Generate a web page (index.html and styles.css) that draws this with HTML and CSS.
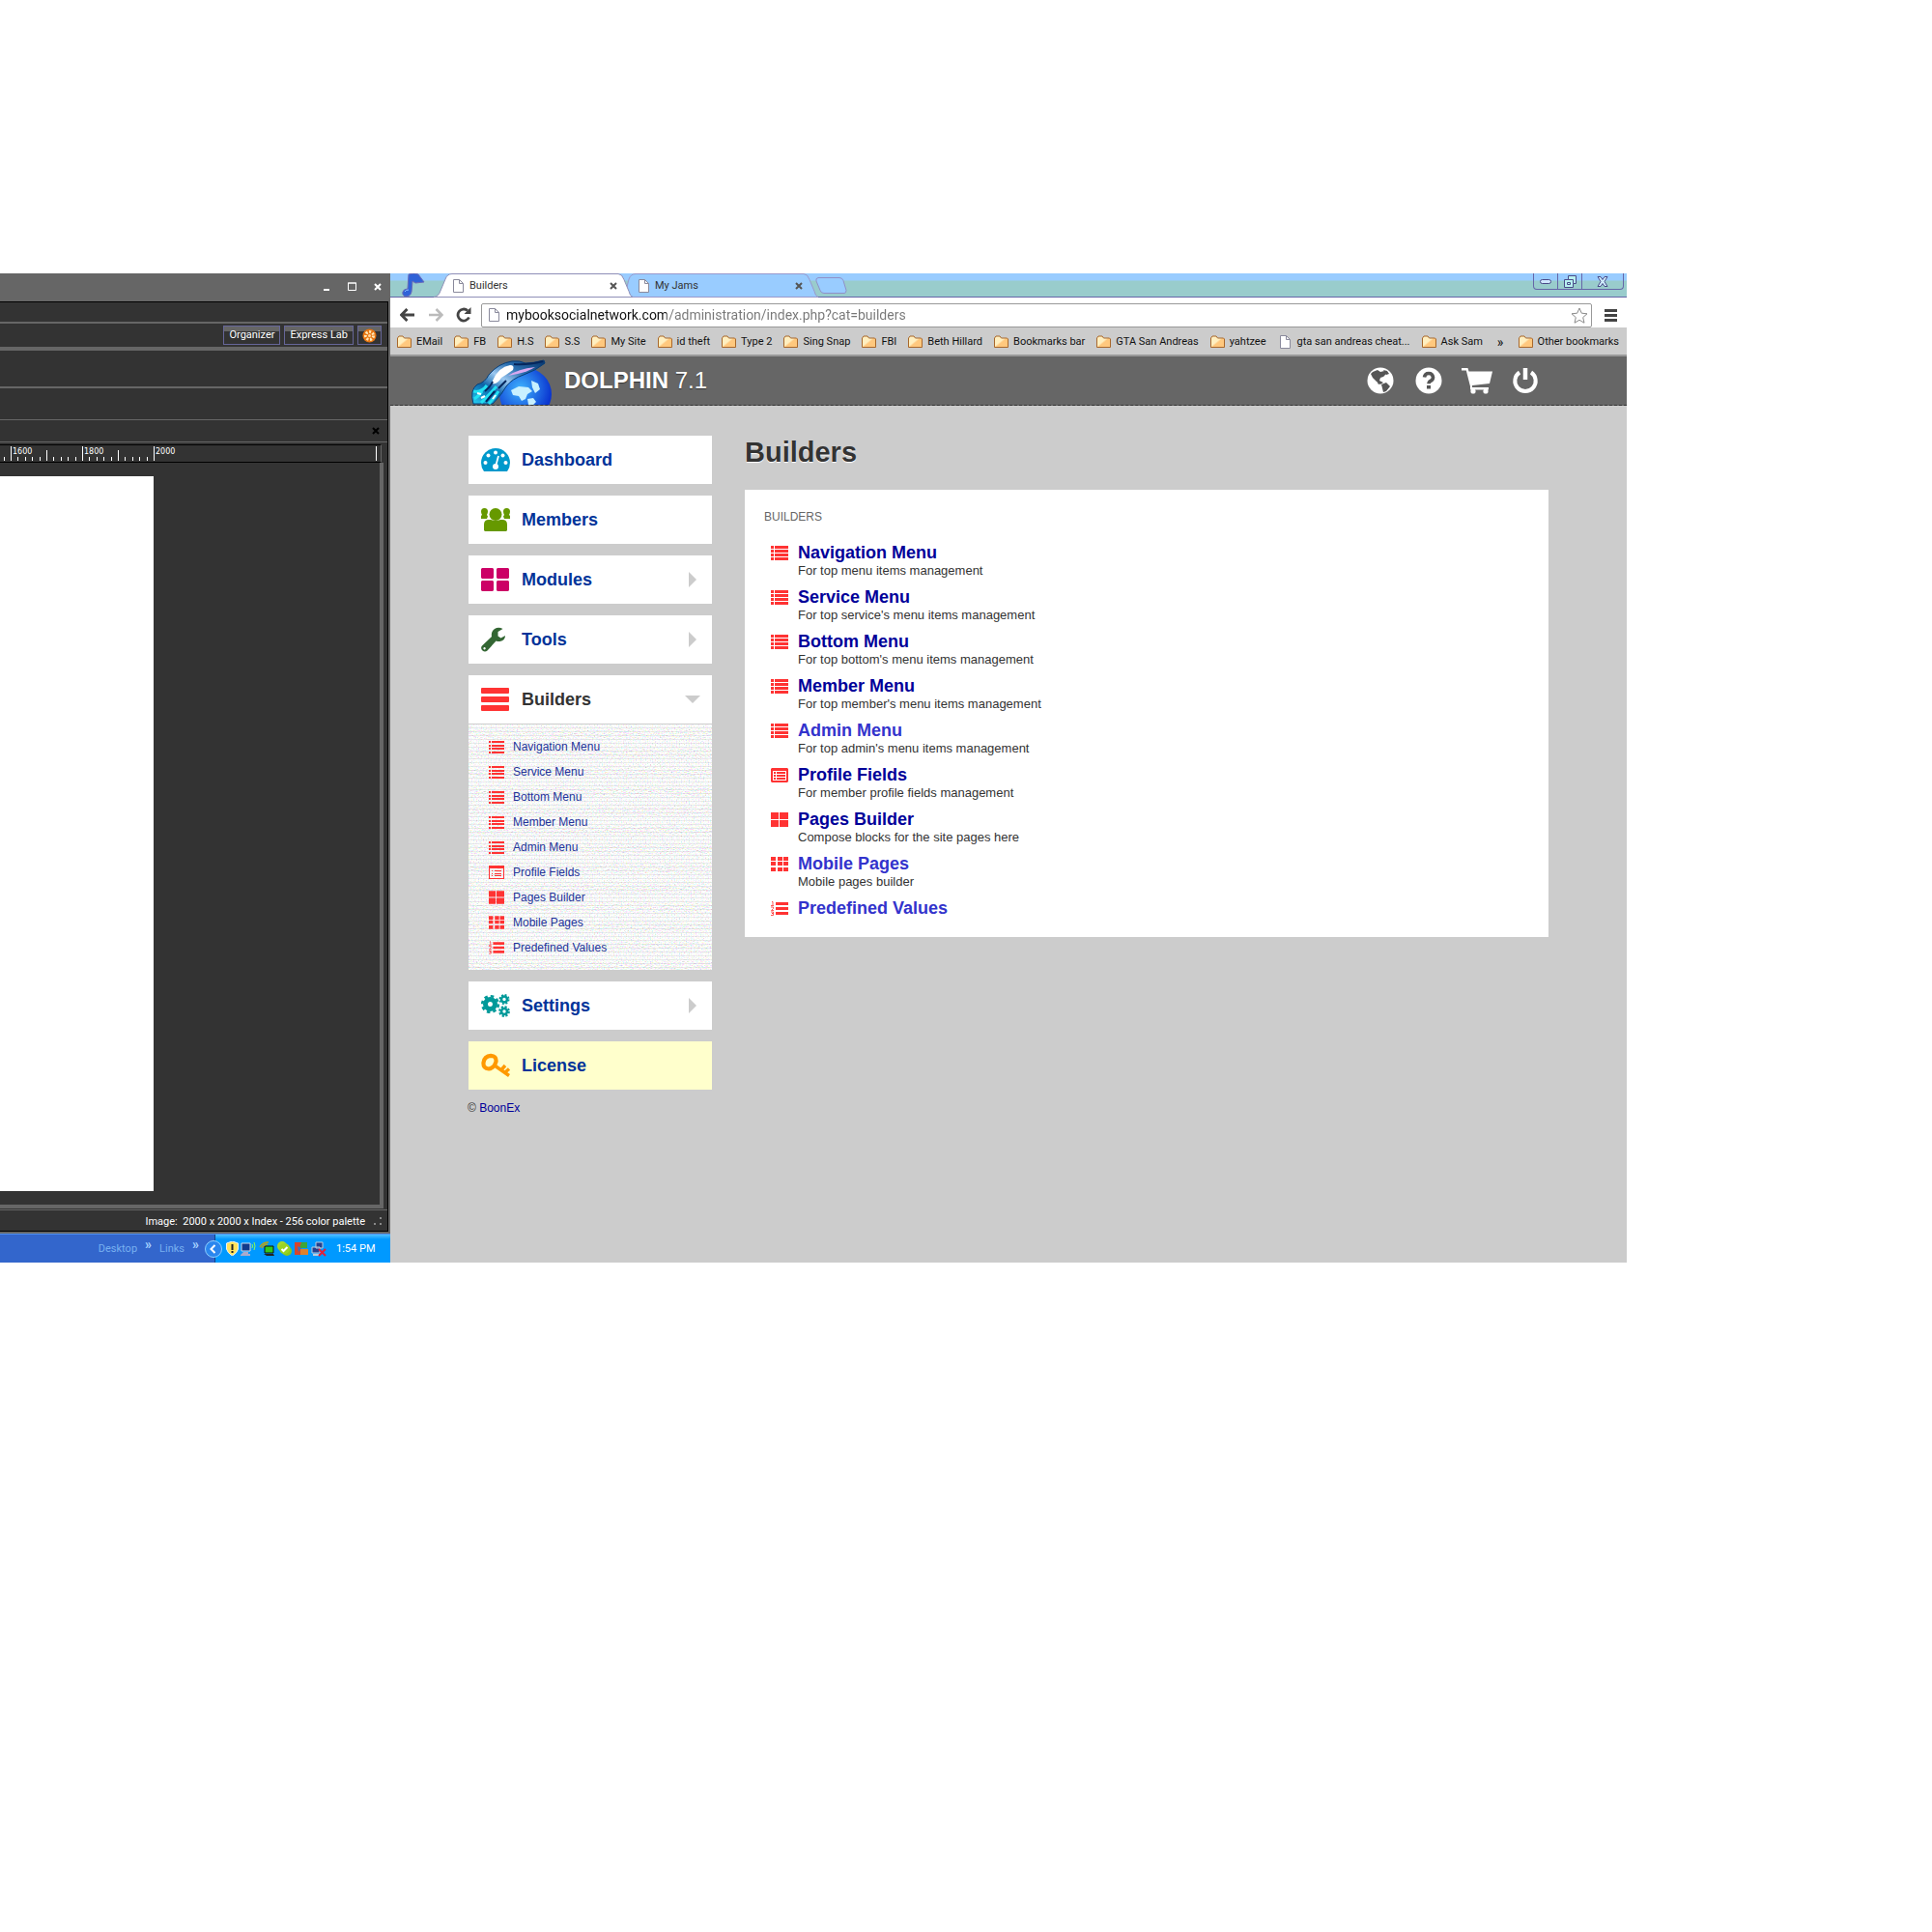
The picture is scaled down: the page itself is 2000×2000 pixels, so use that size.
FILE: index.html
```html
<!DOCTYPE html>
<html lang="en">
<head>
<meta charset="utf-8">
<title>Builders</title>
<link rel="stylesheet" href="styles.css">
</head>
<body>
<svg class="defs" aria-hidden="true">
  <linearGradient id="g-folder" x1="0" y1="0" x2="1" y2="1"><stop offset=".45" stop-color="#ffefc0"/><stop offset=".55" stop-color="#ffc87e"/></linearGradient>
  <radialGradient id="g-globe" cx=".4" cy=".4" r=".6"><stop offset="0" stop-color="#3fb4ff"/><stop offset="1" stop-color="#0a35d0"/></radialGradient>
  <linearGradient id="g-dolphin" x1="0" y1="1" x2="1" y2="0"><stop offset="0" stop-color="#27d3f5"/><stop offset=".3" stop-color="#0b62a8"/><stop offset=".5" stop-color="#9cc8f0"/><stop offset=".7" stop-color="#2a6fb0"/><stop offset="1" stop-color="#06336a"/></linearGradient>
  <symbol id="folder" viewBox="0 0 15 13"><path d="M.5 12V2.5L2 .5h4l1.500 2h6l1 1V12z" fill="url(#g-folder)" stroke="#a8682c"/></symbol>
  <symbol id="page" viewBox="0 0 11 14"><path d="M.5.5h6l4 4v9H.5z" fill="#fff" stroke="#8a8a9c"/><path d="M6.500.5v4h4" fill="none" stroke="#8a8a9c"/></symbol>
  <symbol id="cross" viewBox="0 0 8 8"><path d="M1 1l6 6M7 1L1 7" stroke="currentColor" stroke-width="2" fill="none"/></symbol>
  <symbol id="list" viewBox="0 0 18 15"><path d="M0 0h3v3H0zM4 0h14v3H4zM0 4h3v3H0zM4 4h14v3H4zM0 8h3v3H0zM4 8h14v3H4zM0 12h3v3H0zM4 12h14v3H4z"/></symbol>
  <symbol id="list-small" viewBox="0 0 16 14"><path d="M0 1h2v2H0zM3 1h13v2H3zM0 5h2v2H0zM3 5h13v2H3zM0 8h2v2H0zM3 8h13v2H3zM0 12h2v2H0zM3 12h13v2H3z"/></symbol>
  <symbol id="form" viewBox="0 0 18 15"><path fill-rule="evenodd" d="M1 0h16l1 1v13l-1 1H1l-1-1V1zM2 3v10h14V3zM3 4h2v2H3zM6 4h9v2H6zM3 7h2v2H3zM6 7h9v2H6zM3 10h2v2H3zM6 10h9v2H6z"/></symbol>
  <symbol id="form-small" viewBox="0 0 16 14"><path fill-rule="evenodd" d="M0 0h16v14H0zM1 3v10h14V3zM3 5h1v1H3zM6 5h7v1H6zM3 8h1v1H3zM6 8h7v1H6zM3 10h1v1H3zM6 10h7v1H6z"/></symbol>
  <symbol id="blocks" viewBox="0 0 18 15"><path d="M0 0h8v7H0zM9 0h9v7h-9zM0 8h8v7H0zM9 8h9v7h-9z"/></symbol>
  <symbol id="cells" viewBox="0 0 18 15"><path d="M0 0h5v4H0zM7 0h5v4H7zM13 0h5v4h-5zM0 5h5v4H0zM7 5h5v4H7zM13 5h5v4h-5zM0 11h5v4H0zM7 11h5v4H7zM13 11h5v4h-5z"/></symbol>
  <symbol id="numbered" viewBox="0 0 18 15"><path d="M5 1h13v3H5zM5 6h13v3H5zM5 11h13v3H5z"/><path d="M1 .5h1V4M0 4.500h3M0 6h2.500v1.500L.5 9.500H3M0 11h2.500v1.500H1h1.500v2H0" fill="none" stroke="#ff3333" stroke-width=".8"/></symbol>
</svg>

<main class="desktop">
  <section class="left" aria-label="Photo editor">
    <div class="editor">
      <header class="editor-title">
        <button aria-label="Minimize"><svg width="7" height="9"><path d="M0 7h6v2H0z" fill="#fff"/></svg></button>
        <button aria-label="Maximize"><svg width="9" height="9"><path d="M.5 1h8v7.500h-8zM0 1h9" fill="none" stroke="#fff"/></svg></button>
        <button aria-label="Close"><svg width="8" height="8"><use href="#cross"/></svg></button>
      </header>
      <div class="editor-body">
        <div class="menu-row"></div>
        <div class="tool-row">
          <button>Organizer</button>
          <button>Express Lab</button>
          <button class="wheel" aria-label="Palette"><svg width="15" height="15" viewBox="0 0 15 15"><circle cx="7.500" cy="7.500" r="7" fill="#e87511"/><circle cx="7.500" cy="7.500" r="4" fill="none" stroke="#ffe9b8" stroke-width="3" stroke-dasharray="2 1.600"/><circle cx="7.500" cy="7.500" r="1.500" fill="#ffd7a0"/></svg></button>
        </div>
        <div class="options-row"></div>
        <div class="blank-row"></div>
        <div class="doc-row"><button aria-label="Close image"><svg width="8" height="8"><use href="#cross"/></svg></button></div>
        <div class="ruler">
          <svg width="390" height="16"><path d="M11.500 1v15M85.500 1v15M159.500 1v15M389.500 1v15M48.500 5v11M122.500 5v11M4.500 12v4M18.500 12v4M26.500 12v4M33.500 12v4M41.500 12v4M55.500 12v4M63.500 12v4M70.500 12v4M78.500 12v4M92.500 12v4M100.500 12v4M107.500 12v4M115.500 12v4M129.500 12v4M137.500 12v4M144.500 12v4M152.500 12v4" stroke="#fff"/><text x="13" y="9">1600</text><text x="87" y="9">1800</text><text x="161" y="9">2000</text></svg>
        </div>
        <div class="workspace"><div class="canvas"></div></div>
        <div class="status">Image:&nbsp; 2000 x 2000 x Index - 256 color palette<svg width="10" height="10" viewBox="0 0 10 10"><path d="M7 0h2v2H7zM7 6h2v2H7zM1 6h2v2H1z" fill="#888"/></svg></div>
      </div>
    </div>
    <footer class="taskbar">
      <nav class="quick"><a href="#">Desktop</a><b>»</b><a href="#">Links</a><b>»</b></nav>
      <div class="tray">
        <button class="expand" aria-label="Show hidden icons"><svg width="18" height="18" viewBox="0 0 18 18"><circle cx="9" cy="9" r="8.500" fill="#2a86ee" stroke="#8fd0ff"/><path d="M10.500 5L6.500 9l4 4" fill="none" stroke="#fff" stroke-width="2"/></svg></button>
        <svg width="13" height="15" viewBox="0 0 13 15"><path d="M6.500 0L12.500 2v6q-1 4-6 7-5-3-6-7V2z" fill="#ffe25a" stroke="#e8f3ff"/><path d="M6.500 3v6M6.500 10v2" stroke="#222" stroke-width="2"/></svg>
        <svg width="17" height="15" viewBox="0 0 17 15"><path d="M1 2h9v8H1z" fill="#123a8c" stroke="#cde"/><path d="M3 11h5v2h2v2H0v-1z" fill="#aac"/><path d="M12 3q1 2 0 4M14 1q2 4 0 8" stroke="#8cff50" fill="none"/></svg>
        <svg width="17" height="16" viewBox="0 0 17 16"><path d="M6 5h9v7H6z" fill="#2fc91b" stroke="#111"/><path d="M5 13l10 0 1 2H8z" fill="#222"/><path d="M1 6q3-5 9-5M3 7q2-4 6-4" stroke="#b7a21a" stroke-width="1.500" fill="none"/></svg>
        <svg width="15" height="15" viewBox="0 0 15 15"><circle cx="5" cy="5" r="5" fill="#a5d92b"/><circle cx="10" cy="10" r="5" fill="#8cc919"/><circle cx="7.500" cy="7.500" r="5.500" fill="#9bd321"/><path d="M4.500 8l2 2 4-4" stroke="#fff" stroke-width="2" fill="none"/></svg>
        <svg width="16" height="16" viewBox="0 0 16 16"><path d="M1 1h7v13H1z" fill="#d8452c"/><path d="M8 1h6v6H6z" fill="#3da53a"/><path d="M7 8h8v6H7z" fill="#e0812b"/><path d="M4 5l4 2-3 4" fill="#3b6fc4"/></svg>
        <svg width="16" height="16" viewBox="0 0 16 16"><path d="M5 1h7v6H5zM1 6h8v6H1z" fill="#24408f" stroke="#bcd"/><path d="M2 14h6" stroke="#bcd" stroke-width="2"/><path d="M8 8l7 7M15 8l-7 7" stroke="#e0203a" stroke-width="2"/></svg>
        <time>1:54 PM</time>
      </div>
    </footer>
  </section>

  <section class="browser" aria-label="Web browser">
    <div class="tabstrip">
      <svg class="note" width="24" height="24" viewBox="0 0 24 24"><path d="M7 1q6-2 10 0l6 8-9 1-3-2-1 11q-1 5-6 5-4-1-3-5 1-3 5-3z" fill="#2f62d8" stroke="#6a6ab8"/><path d="M3 19q1-2 4-2" stroke="#8fc0ff" fill="none"/></svg>
      <div class="tab active">
        <svg class="tab-shape" viewBox="0 0 206 25" preserveAspectRatio="none"><path d="M0 24.500Q5 24 7 18L12 6Q14 .5 19 .5H191q4 0 6 6l5 12q1 5 4 6z" fill="#fff" stroke="#8f8fb8"/></svg>
        <svg width="11" height="14"><use href="#page"/></svg><span>Builders</span>
        <button aria-label="Close tab"><svg width="8" height="8"><use href="#cross"/></svg></button>
      </div>
      <div class="tab">
        <svg class="tab-shape" viewBox="0 0 206 25" preserveAspectRatio="none"><path d="M0 24.500Q5 24 7 18L10 6Q12 .5 17 .5H191q4 0 6 6l5 12q1 5 4 6z" fill="#99ccff" stroke="#9999cc"/></svg>
        <svg width="11" height="14"><use href="#page"/></svg><span>My Jams</span>
        <button aria-label="Close tab"><svg width="8" height="8"><use href="#cross"/></svg></button>
      </div>
      <button class="newtab" aria-label="New tab"><svg width="33" height="17" viewBox="0 0 33 17"><path d="M3 .5h22q3 0 4 3l3 10q0 3-2 3H9q-3 0-4-3L1 4Q0 1 3 .5z" fill="#99ccff" stroke="#9090c8"/></svg></button>
      <div class="winbuttons">
        <button aria-label="Minimize"><svg width="12" height="5"><rect x=".5" y=".5" width="11" height="4" rx="2" fill="#cfe6ff" stroke="#4a4a88"/></svg></button>
        <button aria-label="Restore"><svg width="13" height="13"><path d="M4.500.5h8v8h-3v4h-9v-8h4z" fill="#b8f0f0" stroke="#4a4a88"/><path d="M4.500 4.500h5v4M3.500 7.500h3v2h-3z" fill="none" stroke="#4a4a88"/></svg></button>
        <button class="wide" aria-label="Close"><svg width="12" height="11" viewBox="0 0 12 11"><path d="M1 .5h3l2 3 2-3h3L8 5.500l3 5H8l-2-3-2 3H1l3-5z" fill="#cfeeff" stroke="#4a4a88"/></svg></button>
      </div>
    </div>
    <div class="toolbar">
      <button aria-label="Back"><svg width="16" height="14" viewBox="0 0 16 14"><path d="M1.500 7H15M7.500 1l-6 6 6 6" stroke="#444" stroke-width="3" fill="none"/></svg></button>
      <button aria-label="Forward"><svg width="16" height="14" viewBox="0 0 16 14"><path d="M14.500 7H1M8.500 1l6 6-6 6" stroke="#bbb" stroke-width="2.500" fill="none"/></svg></button>
      <button aria-label="Reload"><svg width="16" height="16" viewBox="0 0 16 16"><path d="M13.500 10.500A6 6 0 1 1 12 3.500" stroke="#444" stroke-width="2.800" fill="none"/><path d="M15.500 0v7H8.500z" fill="#444"/></svg></button>
      <div class="omnibox">
        <svg width="11" height="14"><use href="#page"/></svg>
        <input type="text" aria-label="Address" value="mybooksocialnetwork.com/administration/index.php?cat=builders">
        <button aria-label="Bookmark this page"><svg width="18" height="17" viewBox="0 0 18 17"><path d="M9 1l2.300 5.200 5.700.6-4.300 3.800 1.300 5.600L9 13.300l-5 2.900 1.300-5.600L1 6.800l5.700-.6z" fill="#fff" stroke="#8a8a8a"/></svg></button>
      </div>
      <button aria-label="Menu"><svg width="13" height="13"><path d="M0 1.500h13M0 6.500h13M0 11.500h13" stroke="#444" stroke-width="3"/></svg></button>
    </div>
    <nav class="bookmarks">
      <a href="#"><svg><use href="#folder"/></svg>EMail</a>
      <a href="#"><svg><use href="#folder"/></svg>FB</a>
      <a href="#"><svg><use href="#folder"/></svg>H.S</a>
      <a href="#"><svg><use href="#folder"/></svg>S.S</a>
      <a href="#"><svg><use href="#folder"/></svg>My Site</a>
      <a href="#"><svg><use href="#folder"/></svg>id theft</a>
      <a href="#"><svg><use href="#folder"/></svg>Type 2</a>
      <a href="#"><svg><use href="#folder"/></svg>Sing Snap</a>
      <a href="#"><svg><use href="#folder"/></svg>FBI</a>
      <a href="#"><svg><use href="#folder"/></svg>Beth Hillard</a>
      <a href="#"><svg><use href="#folder"/></svg>Bookmarks bar</a>
      <a href="#"><svg><use href="#folder"/></svg>GTA San Andreas</a>
      <a href="#"><svg><use href="#folder"/></svg>yahtzee</a>
      <a href="#"><svg><use href="#page"/></svg>gta san andreas cheat...</a>
      <a href="#"><svg><use href="#folder"/></svg>Ask Sam</a>
      <a href="#" class="more">»</a>
      <a href="#" class="other"><svg><use href="#folder"/></svg>Other bookmarks</a>
    </nav>

    <header class="site-head">
      <svg width="84" height="47" viewBox="0 0 84 47">
        <circle cx="56" cy="36" r="27" fill="url(#g-globe)"/>
        <path d="M41 32l8-4 10 1 4 4-5 3-2 5-4 2-3-5-6-1zM62 22l7 3 2 6-5 4-3-6zM58 41l6-1 3 4-3 3h-5z" fill="#c8f0ff"/>
        <path d="M2 46Q-2 32 6 26 14 24 18 16 28 4 42 2q8-1 14 2 8 0 19-3l1 3Q66 12 54 16 42 20 36 28 32 36 22 46z" fill="url(#g-dolphin)" stroke="#063d78"/>
        <path d="M22 22Q28 8 40 6q5 0 3 5-7 5-12 8-4 7-9 6z" fill="#fff"/>
        <path d="M38 17q10-7 28-9-8 5-18 7z" fill="#d8a8f0"/>
        <path d="M2 33q8 2 14-6M3 41q5-3 8-8M10 45q8-8 16-17M18 46q6-6 10-13" stroke="#22e0f2" stroke-width="3" fill="none"/>
        <path d="M14 33q6-5 8-10M28 30l8-8M15 44l9-11M44 5q14 1 30-3" stroke="#05265c" stroke-width="2" fill="none"/>
        <path d="M6 35l4 1M10 40l4-2M22 41l3-4" stroke="#fff" stroke-width="2"/>
      </svg>
      <h2><b>DOLPHIN</b> 7.1</h2>
      <nav>
        <a href="#" aria-label="Site"><svg width="28" height="28" viewBox="0 0 28 28"><circle cx="14" cy="14" r="13.500" fill="#fff"/><path d="M6 5l5-2 3 2 4-1 2 3-3 3-3 1-1 3 4 2-3 2-4-3-4-4-2-4zM17 3l4 1 2 3-3 1zM15 18l5-2 4 4-4 5-3 1-1-4zM10 14l4 3-2 1z" fill="#555"/></svg></a>
        <a href="#" aria-label="Help"><svg width="28" height="28" viewBox="0 0 28 28"><circle cx="14" cy="14" r="13.500" fill="#fff"/><path d="M9.500 10.500Q10 6.500 14 6.500t4.500 4q0 2.500-2.500 3.800-2 1-2 3" fill="none" stroke="#555" stroke-width="3.600"/><path d="M12 19h4v3.500h-4z" fill="#555"/></svg></a>
        <a href="#" aria-label="Store"><svg width="32" height="28" viewBox="0 0 32 28"><path d="M0 1h6.500l1 3.500H32L29 17l-18 2v2h17v2.500H9V20L4.800 3.500H0z" fill="#fff"/><circle cx="12" cy="25" r="2.600" fill="#fff"/><circle cx="25" cy="25" r="2.600" fill="#fff"/></svg></a>
        <a href="#" aria-label="Log out"><svg width="28" height="28" viewBox="0 0 28 28"><path d="M8 5.500a10.700 10.700 0 1 0 12 0" fill="none" stroke="#fff" stroke-width="4"/><path d="M14 1v12" stroke="#fff" stroke-width="4.500"/></svg></a>
      </nav>
    </header>

    <div class="page">
      <aside>
        <a class="item" href="#"><svg class="ico" viewBox="0 0 30 24" fill="#0099cc"><path d="M3 24Q0 20 0 15a15 15 0 0 1 30 0q0 5-3 9z"/><g fill="#fff"><circle cx="4.500" cy="15" r="2"/><circle cx="7.500" cy="7.500" r="2"/><circle cx="15" cy="4.500" r="2"/><circle cx="22.500" cy="7.500" r="2"/><circle cx="25.500" cy="15" r="2"/><circle cx="15" cy="19" r="3"/></g><path d="M15 19l3-11" stroke="#fff" stroke-width="1.800"/></svg>Dashboard</a>
        <a class="item" href="#"><svg class="ico" viewBox="0 0 30 24" fill="#669900"><circle cx="15" cy="6.500" r="6.500"/><path d="M3 23v-6q0-5 5-5h2q5 2 10 0h2q5 0 5 5v6l-1 1H4zM0 11V8l1-1Q0 5 0 3.500 0 0 3.500 0T7 3.500Q7 5 6 7l1 1.500L6 11zM30 11V8l-1-1q1-2 1-3.500Q30 0 26.500 0T23 3.500q0 1.500 1 3.500l-1 1.500 1 2.500z"/></svg>Members</a>
        <a class="item" href="#"><svg class="ico" viewBox="0 0 30 24" fill="#cc0066"><path d="M1 0h11l1 1v9l-1 1H1l-1-1V1zM17 0h11l1 1v9l-1 1H17l-1-1V1zM1 13h11l1 1v9l-1 1H1l-1-1v-9zM17 13h11l1 1v9l-1 1H17l-1-1v-9z"/></svg>Modules<i class="right"></i></a>
        <a class="item" href="#"><svg class="ico" viewBox="0 0 30 24" fill="#336633"><path fill-rule="evenodd" d="M22.500 1L17.500 4v4.500l3 2 4.500-2.500q0 5-5.500 6-2 .3-4-.5L6.500 23.500q-2.500 2-5 0-2.500-2.500-.5-5L11 9Q10 4 14 1q4-2.500 8.500 0zM3.500 20a1.200 1.200 0 1 0 .1 0z"/></svg>Tools<i class="right"></i></a>
        <div class="group">
          <a class="item open" href="#"><svg class="ico" viewBox="0 0 30 24" fill="#ff3333"><rect width="29" height="6" rx="1"/><rect y="9" width="29" height="6" rx="1"/><rect y="18" width="29" height="6" rx="1"/></svg>Builders<i class="down"></i></a>
          <ul>
            <li><a href="#"><svg><use href="#list-small"/></svg>Navigation Menu</a></li>
            <li><a href="#"><svg><use href="#list-small"/></svg>Service Menu</a></li>
            <li><a href="#"><svg><use href="#list-small"/></svg>Bottom Menu</a></li>
            <li><a href="#"><svg><use href="#list-small"/></svg>Member Menu</a></li>
            <li><a href="#"><svg><use href="#list-small"/></svg>Admin Menu</a></li>
            <li><a href="#"><svg><use href="#form-small"/></svg>Profile Fields</a></li>
            <li><a href="#"><svg><use href="#blocks"/></svg>Pages Builder</a></li>
            <li><a href="#"><svg><use href="#cells"/></svg>Mobile Pages</a></li>
            <li><a href="#"><svg><use href="#numbered"/></svg>Predefined Values</a></li>
          </ul>
        </div>
        <a class="item" href="#"><svg class="ico" viewBox="0 0 30 24" fill="none" stroke="#009999"><circle cx="9.500" cy="10.500" r="5" stroke-width="5"/><circle cx="9.500" cy="10.500" r="8.300" stroke-width="2.600" stroke-dasharray="3.500 3.020"/><circle cx="24" cy="5.500" r="3" stroke-width="2.600"/><circle cx="24" cy="5.500" r="4.700" stroke-width="1.600" stroke-dasharray="2 1.700"/><circle cx="24" cy="18" r="3" stroke-width="2.600"/><circle cx="24" cy="18" r="4.900" stroke-width="2" stroke-dasharray="2.200 1.640"/></svg>Settings<i class="right"></i></a>
        <a class="item license" href="#"><svg class="ico" viewBox="0 0 30 24" fill="none" stroke="#ff9900"><path d="M2.500 9Q3.500 2 10 1.800 16 2 15.500 8 13.500 15 8 15.500 2 15 2.500 9z" stroke-width="4.200"/><path d="M14 12l15 10.500M21 16.500l4-4.500M25 19l4-3.500" stroke-width="3.400"/></svg>License</a>
        <p class="copy">© <a href="#">BoonEx</a></p>
      </aside>
      <article>
        <h1>Builders</h1>
        <div class="card">
          <h3>BUILDERS</h3>
          <ul>
            <li><svg><use href="#list"/></svg><div><a href="#">Navigation Menu</a><p>For top menu items management</p></div></li>
            <li><svg><use href="#list"/></svg><div><a href="#">Service Menu</a><p>For top service's menu items management</p></div></li>
            <li><svg><use href="#list"/></svg><div><a href="#">Bottom Menu</a><p>For top bottom's menu items management</p></div></li>
            <li><svg><use href="#list"/></svg><div><a href="#">Member Menu</a><p>For top member's menu items management</p></div></li>
            <li><svg><use href="#list"/></svg><div><a href="#" class="lite">Admin Menu</a><p>For top admin's menu items management</p></div></li>
            <li><svg><use href="#form"/></svg><div><a href="#">Profile Fields</a><p>For member profile fields management</p></div></li>
            <li><svg><use href="#blocks"/></svg><div><a href="#">Pages Builder</a><p>Compose blocks for the site pages here</p></div></li>
            <li><svg><use href="#cells"/></svg><div><a href="#" class="lite">Mobile Pages</a><p>Mobile pages builder</p></div></li>
            <li><svg><use href="#numbered"/></svg><div><a href="#" class="lite">Predefined Values</a></div></li>
          </ul>
        </div>
      </article>
    </div>
  </section>
</main>
</body>
</html>
```

FILE: styles.css
```css
* { box-sizing: border-box; }
body {
  margin: 0;
  background: #fff;
  font: 12px/16px "Liberation Sans", Arial, sans-serif;
  color: #333;
}
a { color: #000099; text-decoration: none; }
ul { list-style: none; margin: 0; padding: 0; }
h1, h2, h3, p { margin: 0; font-weight: normal; }
svg { display: block; flex: none; }
button {
  display: flex;
  align-items: center;
  justify-content: center;
  flex: none;
  padding: 0;
  border: 0;
  background: none;
  color: inherit;
  font: inherit;
}
.defs { position: absolute; width: 0; height: 0; }

.desktop {
  display: grid;
  grid-template-columns: 404px minmax(0, 1fr);
  margin: 283px 316px 0 0;
  min-height: 1024px;
}

/* photo editor window */
.left {
  display: flex;
  flex-direction: column;
  font: 11px/16px Roboto, sans-serif;
  color: #fff;
}
.editor {
  flex: 1;
  display: flex;
  flex-direction: column;
  background: #666;
  padding: 0 2px 2px 0;
}
.editor-title {
  display: flex;
  justify-content: flex-end;
  align-items: center;
  gap: 18px;
  height: 29px;
  padding: 0 7px 2px 0;
}
.editor-body {
  flex: 1;
  display: flex;
  flex-direction: column;
  background: #333;
  border: solid #000;
  border-width: 1px 1px 1px 0;
}
.menu-row { height: 22px; border-bottom: 2px solid #666; }
.tool-row {
  display: flex;
  justify-content: flex-end;
  align-items: center;
  gap: 4px;
  height: 28px;
  padding-right: 6px;
  border-bottom: 4px solid #666;
}
.tool-row button {
  height: 20px;
  padding: 0 5px;
  border: 1px solid #666699;
  background: linear-gradient(#666 5px, #333 5px);
}
.tool-row .wheel { padding: 0 4px; }
.options-row { height: 39px; border-bottom: 2px solid #666; }
.blank-row { height: 33px; border-bottom: 1px solid #666; }
.doc-row {
  display: flex;
  justify-content: flex-end;
  align-items: center;
  height: 23px;
  padding-right: 8px;
  border-bottom: 1px solid #666;
  color: #000;
}
.ruler {
  margin: 2px 6px 0 0;
  height: 19px;
  border: solid #000;
  border-width: 1px 0;
  border-right: 1px solid #666;
}
.ruler text { font: 8px "DejaVu Sans", sans-serif; fill: #fff; }
.workspace {
  flex: 1;
  margin-right: 4px;
  padding: 14px 0;
  border: solid #666;
  border-width: 0 4px 4px 0;
  display: flex;
}
.canvas { width: 159px; background: #fff; }
.status {
  display: flex;
  align-items: center;
  justify-content: flex-end;
  gap: 8px;
  height: 22px;
  margin-top: 1px;
  padding: 3px 5px 0 0;
  border-top: 1px solid #666;
}
.taskbar { display: flex; height: 30px; background: #3366cc; border-top: 1px solid #4f8ff0; }
.quick {
  flex: 1;
  display: flex;
  align-items: center;
  justify-content: flex-end;
  gap: 8px;
  padding-right: 16px;
  color: #66b5f5;
}
.quick a { color: #78b0f0; }
.quick b { color: #a8d4ff; padding-bottom: 10px; font-size: 14px; }
.tray {
  display: flex;
  align-items: center;
  gap: 2px;
  width: 182px;
  background: linear-gradient(#4fc0ff, #0099ff 5px);
  border-left: 1px solid #114488;
}
.expand { margin: 0 2px 0 -11px; }
.tray time { margin-left: 8px; white-space: nowrap; }

/* browser window */
.browser { display: flex; flex-direction: column; background: #ccc; }
.tabstrip {
  display: flex;
  height: 25px;
  padding: 0 3px 0 12px;
  background: linear-gradient(#99ccff 7px, #99cccc 8px);
  border-bottom: 1px solid #6666a8;
  font: 11px/16px Roboto, sans-serif;
}
.note { margin-right: 9px; }
.tab {
  position: relative;
  display: flex;
  align-items: center;
  gap: 6px;
  width: 206px;
  height: 25px;
  padding: 1px 16px 0 20px;
}
.tab + .tab { margin-left: -14px; }
.tab.active { z-index: 1; }
.tab > :not(.tab-shape) { position: relative; }
.tab-shape { position: absolute; inset: 0; width: 100%; height: 100%; }
.tab button { margin-left: auto; color: #555; }
.newtab { height: 25px; margin-left: -3px; }
.winbuttons {
  display: flex;
  height: 17px;
  margin-left: auto;
  border: 1px solid #6666a8;
  border-top: 0;
  border-radius: 0 0 4px 4px;
}
.winbuttons button { width: 25px; border-right: 1px solid #6666a8; }
.winbuttons button.wide { width: 42px; border: 0; }
.toolbar {
  display: flex;
  align-items: center;
  gap: 13px;
  height: 31px;
  padding: 5px 10px 0;
  background: #fff;
}
.omnibox {
  flex: 1;
  display: flex;
  align-items: center;
  gap: 7px;
  height: 25px;
  margin-left: -3px;
  padding: 0 3px 0 7px;
  border: 1px solid #999;
  border-radius: 2px;
}
.omnibox input {
  flex: 1;
  min-width: 0;
  padding: 0;
  border: 0;
  font: 14px/20px Roboto, sans-serif;
  color: transparent;
  background: linear-gradient(90deg, #111 166px, #777 166px);
  -webkit-background-clip: text;
  background-clip: text;
}
.bookmarks {
  display: flex;
  align-items: center;
  gap: 12px;
  height: 30px;
  padding: 1px 8px 0 7px;
  border-bottom: 2px solid #999;
  font: 11px/16px Roboto, sans-serif;
  white-space: nowrap;
}
.bookmarks a { display: flex; align-items: center; gap: 5px; color: #111; }
.bookmarks svg { width: 15px; height: 14px; }
.bookmarks .more { font-size: 14px; margin-left: 3px; }
.bookmarks .other { margin-left: auto; }

.site-head {
  display: flex;
  align-items: center;
  height: 51px;
  padding: 0 80px 0 84px;
  background: #666;
  border-bottom: 1px dashed #333;
}
.site-head > svg { align-self: flex-end; }
.site-head h2 {
  margin-left: 12px;
  font-size: 24px;
  line-height: 28px;
  color: #fff;
  text-shadow: 0 1px 1px #333;
}
.site-head nav { display: flex; margin-left: auto; }
.site-head nav a { display: flex; justify-content: center; width: 50px; }

.page {
  display: grid;
  grid-template-columns: 252px 1fr;
  gap: 34px;
  align-items: start;
  padding: 31px 81px 0;
}
aside { display: flex; flex-direction: column; gap: 12px; }
.item {
  display: flex;
  align-items: center;
  gap: 12px;
  height: 50px;
  padding: 0 12px 0 13px;
  background: #fff;
  color: #003399;
  font-size: 18px;
  font-weight: bold;
  line-height: 20px;
}
.ico { width: 30px; height: 24px; overflow: visible; }
.item i { margin-left: auto; border: 8px solid transparent; }
.item .right { margin-right: 4px; border-left-color: #ccc; border-right: 0; }
.item .down { border-top-color: #ccc; border-bottom: 0; }
.item.open { color: #333; }
.item.license { background: #ffffcc; }
.group ul {
  padding: 10px 21px;
  border-top: 1px solid #ccc;
  background:
    repeating-linear-gradient(transparent 0 3px, rgba(120, 120, 140, .14) 3px 4px),
    url("data:image/svg+xml,%3Csvg xmlns='http://www.w3.org/2000/svg' width='252' height='256'%3E%3Cfilter id='n' x='0' y='0' width='100%25' height='100%25'%3E%3CfeTurbulence type='fractalNoise' baseFrequency='.6 .95' numOctaves='1' seed='4'/%3E%3CfeColorMatrix values='1.6 0 0 0 .2 0 1.6 0 0 .22 0 0 1.6 0 .21 0 0 0 0 1'/%3E%3C/filter%3E%3Crect width='252' height='256' filter='url(%23n)'/%3E%3C/svg%3E"),
    #f3f3f3;
}
.group li a {
  display: flex;
  align-items: center;
  gap: 9px;
  height: 26px;
  color: #223399;
}
.group li svg { width: 16px; height: 14px; fill: #ff3333; }
.copy { margin: -1px; }
.card {
  margin-top: 22px;
  padding: 20px 20px 19px;
  background: #fff;
}
h1 {
  font-size: 29px;
  font-weight: bold;
  line-height: 34px;
  text-shadow: 0 1px 1px #fff;
}
.card h3 { font-size: 12px; line-height: 16px; margin-bottom: 18px; color: #666; }
.card li { display: flex; gap: 10px; min-height: 46px; padding-left: 7px; }
.card li:last-child { min-height: 22px; }
.card li svg { width: 18px; height: 15px; margin-top: 4px; fill: #ff3333; }
.card li a { display: block; font-size: 18px; font-weight: bold; line-height: 22px; }
.card li a.lite { color: #3333cc; }
.card p { font-size: 13px; line-height: 16px; }
```
